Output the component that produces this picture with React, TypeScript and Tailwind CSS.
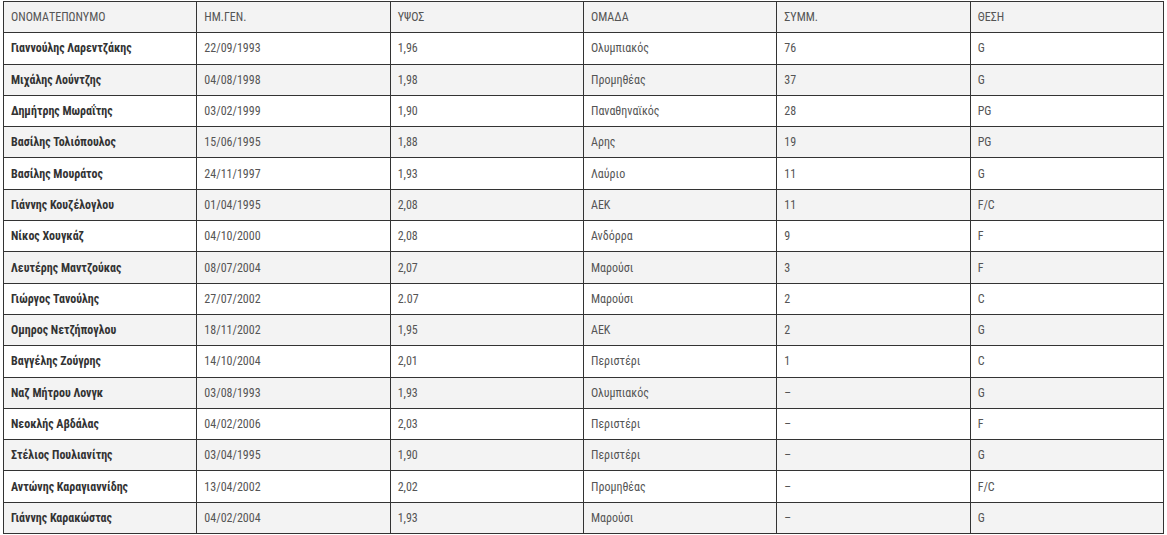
const rows = [
  ["Γιαννούλης Λαρεντζάκης", "22/09/1993", "1,96", "Ολυμπιακός", "76", "G"],
  ["Μιχάλης Λούντζης", "04/08/1998", "1,98", "Προμηθέας", "37", "G"],
  ["Δημήτρης Μωραΐτης", "03/02/1999", "1,90", "Παναθηναϊκός", "28", "PG"],
  ["Βασίλης Τολιόπουλος", "15/06/1995", "1,88", "Αρης", "19", "PG"],
  ["Βασίλης Μουράτος", "24/11/1997", "1,93", "Λαύριο", "11", "G"],
  ["Γιάννης Κουζέλογλου", "01/04/1995", "2,08", "ΑΕΚ", "11", "F/C"],
  ["Νίκος Χουγκάζ", "04/10/2000", "2,08", "Ανδόρρα", "9", "F"],
  ["Λευτέρης Μαντζούκας", "08/07/2004", "2,07", "Μαρούσι", "3", "F"],
  ["Γιώργος Τανούλης", "27/07/2002", "2.07", "Μαρούσι", "2", "C"],
  ["Ομηρος Νετζήπογλου", "18/11/2002", "1,95", "ΑΕΚ", "2", "G"],
  ["Βαγγέλης Ζούγρης", "14/10/2004", "2,01", "Περιστέρι", "1", "C"],
  ["Ναζ Μήτρου Λονγκ", "03/08/1993", "1,93", "Ολυμπιακός", "–", "G"],
  ["Νεοκλής Αβδάλας", "04/02/2006", "2,03", "Περιστέρι", "–", "F"],
  ["Στέλιος Πουλιανίτης", "03/04/1995", "1,90", "Περιστέρι", "–", "G"],
  ["Αντώνης Καραγιαννίδης", "13/04/2002", "2,02", "Προμηθέας", "–", "F/C"],
  ["Γιάννης Καρακώστας", "04/02/2004", "1,93", "Μαρούσι", "–", "G"],
];

const headers = ["ΟΝΟΜΑΤΕΠΩΝΥΜΟ", "ΗΜ.ΓΕΝ.", "ΥΨΟΣ", "ΟΜΑΔΑ", "ΣΥΜΜ.", "ΘΕΣΗ"];

export default function App() {
  return (
    <div
      className="bg-white w-[1167px] h-[535px] pt-[1px] pl-[3px]"
      style={{ fontFamily: '"Liberation Sans Narrow", "Roboto Condensed", Roboto, sans-serif' }}
    >
      <table className="w-[1161px] border-collapse table-fixed text-[12px] text-[#555]">
        <thead>
          <tr className="bg-[#f3f3f3]">
            {headers.map((h) => (
              <th
                key={h}
                className="h-[31.3px] border border-[#333] px-[7px] text-left font-normal"
              >
                {h}
              </th>
            ))}
          </tr>
        </thead>
        <tbody>
          {rows.map((r, i) => (
            <tr key={r[0]} className={i % 2 === 0 ? "bg-white" : "bg-[#f3f3f3]"}>
              {r.map((c, j) => (
                <td
                  key={j}
                  className={
                    "h-[31.3px] border border-[#333] px-[7px] " +
                    (j === 0 ? "font-bold text-[#333]" : "")
                  }
                >
                  {c}
                </td>
              ))}
            </tr>
          ))}
        </tbody>
      </table>
    </div>
  );
}
